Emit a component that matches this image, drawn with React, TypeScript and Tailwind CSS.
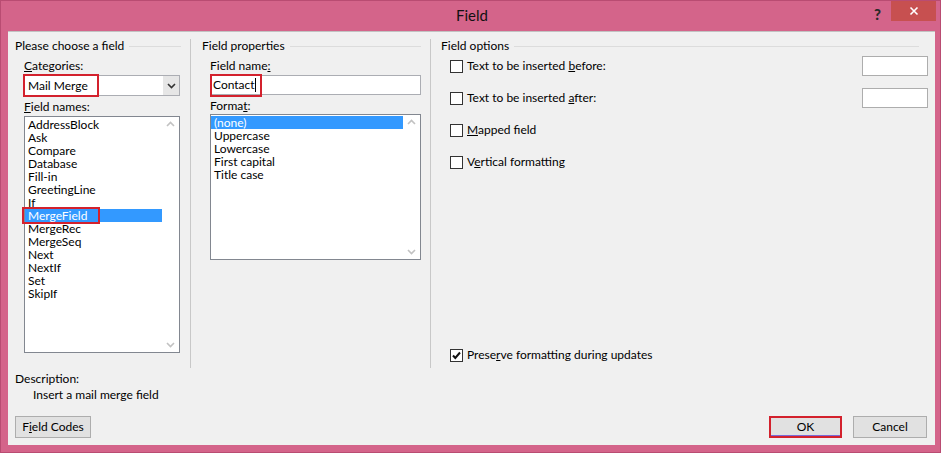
import React from "react";

const font = { fontFamily: 'Lato, "Noto Sans", sans-serif' };

function GroupHeader({ title }: { title: string }) {
  return (
    <div className="flex items-center h-[14px] pr-[9px]">
      <span className="whitespace-nowrap leading-[14px]">{title}</span>
      <div className="flex-1 h-px bg-[#dcdcdc] ml-[5px] mt-px" />
    </div>
  );
}

function ScrollArrows() {
  return (
    <div className="w-[17px] flex flex-col justify-between items-center py-[4px]">
      <svg width="9" height="6" viewBox="0 0 9 6">
        <path d="M1 5 L4.5 1.5 L8 5" fill="none" stroke="#c2c2c2" strokeWidth="1.6" />
      </svg>
      <svg width="9" height="6" viewBox="0 0 9 6">
        <path d="M1 1 L4.5 4.5 L8 1" fill="none" stroke="#c2c2c2" strokeWidth="1.6" />
      </svg>
    </div>
  );
}

function ListBox({
  items,
  selected,
  height,
  width,
  markSelected,
}: {
  items: string[];
  selected: number;
  height: string;
  width: string;
  markSelected?: boolean;
}) {
  return (
    <div className={`flex bg-white border border-[#828790] ${height} ${width}`}>
      <div className="flex-1 pt-px">
        {items.map((it, i) => (
          <div
            key={it}
            className={`relative h-[13px] leading-[13px] pl-[3px] ${
              i === selected ? "bg-[#3399ff] text-white" : "text-black"
            }`}
          >
            {it}
            {markSelected && i === selected && (
              <div className="absolute left-[-3px] top-[-2px] w-[78px] h-[17px] border-2 border-[#d3212d]" />
            )}
          </div>
        ))}
      </div>
      <ScrollArrows />
    </div>
  );
}

function Check({ checked }: { checked?: boolean }) {
  return (
    <div className="w-[13px] h-[13px] border border-[#333] bg-white flex items-center justify-center shrink-0">
      {checked && (
        <svg width="11" height="11" viewBox="0 0 11 11">
          <path d="M2 5.5 L4.3 8 L9 2.5" fill="none" stroke="#111" strokeWidth="2" />
        </svg>
      )}
    </div>
  );
}

function Option({ children, box }: { children: React.ReactNode; box?: boolean }) {
  return (
    <div className="flex items-center h-[20px] pl-[9px]">
      <Check />
      <span className="ml-[4px] whitespace-nowrap">{children}</span>
      {box && <div className="ml-auto w-[66px] h-[20px] bg-white border border-[#adadad]" />}
    </div>
  );
}

export default function App() {
  return (
    <div
      className="w-[941px] h-[453px] bg-[#d4648a] border border-[#b94c72] flex flex-col text-[12px] text-black overflow-hidden"
      style={font}
    >
      {/* Title bar */}
      <div className="relative h-[30px] shrink-0 flex items-center justify-center">
        <span className="text-[15px] text-[#111] -mt-[1px] ml-[3px]">Field</span>
        <div className="absolute right-[59px] top-[2px] text-[15px] font-black text-[#2a2a2a]">?</div>
        <div className="absolute right-[4px] top-0 w-[45px] h-[20px] bg-[#c75050] flex items-center justify-center">
          <svg width="10" height="10" viewBox="0 0 10 10">
            <path d="M1.5 1.5 L8.5 8.5 M8.5 1.5 L1.5 8.5" stroke="#fff" strokeWidth="1.6" />
          </svg>
        </div>
      </div>

      {/* Body */}
      <div className="ml-[7px] mr-[5px] h-[414px] bg-[#f0f0f0] border-t border-[#c2c2c2] px-[7px] pt-[7px] flex flex-col">
        <div className="flex h-[329px]">
          {/* Column 1 */}
          <div className="w-[176px] border-r border-[#c8c8c8] flex flex-col">
            <GroupHeader title="Please choose a field" />
            <div className="pl-[9px] flex flex-col">
              <div className="h-[14px] leading-[14px] mt-[6px]">
                <span className="underline">C</span>ategories:
              </div>
              <div className="relative mt-[2px] w-[156px] h-[21px] bg-white border border-[#abadb3] flex">
                <div className="flex-1 leading-[19px] pl-[3px]">Mail Merge</div>
                <div className="w-[16px] bg-[#e6e6e6] flex items-center justify-center">
                  <svg width="9" height="6" viewBox="0 0 9 6">
                    <path d="M1 1 L4.5 4.5 L8 1" fill="none" stroke="#333" strokeWidth="1.6" />
                  </svg>
                </div>
                <div className="absolute left-[-2px] top-[-2px] w-[76px] h-[23px] border-2 border-[#d3212d]" />
              </div>
              <div className="h-[14px] leading-[14px] mt-[4px]">
                <span className="underline">F</span>ield names:
              </div>
              <div className="mt-[2px]">
                <ListBox
                  items={[
                    "AddressBlock",
                    "Ask",
                    "Compare",
                    "Database",
                    "Fill-in",
                    "GreetingLine",
                    "If",
                    "MergeField",
                    "MergeRec",
                    "MergeSeq",
                    "Next",
                    "NextIf",
                    "Set",
                    "SkipIf",
                  ]}
                  selected={7}
                  height="h-[237px]"
                  width="w-[156px]"
                  markSelected
                />
              </div>
            </div>
          </div>

          {/* Column 2 */}
          <div className="w-[240px] border-r border-[#c8c8c8] pl-[11px] flex flex-col">
            <GroupHeader title="Field properties" />
            <div className="pl-[8px] flex flex-col">
              <div className="h-[14px] leading-[14px] mt-[6px]">
                Field name<span className="underline">:</span>
              </div>
              <div className="relative mt-[2px] w-[211px] h-[20px] bg-white border border-[#abadb3] pl-[2px] leading-[18px]">
                Contact
                <span className="inline-block w-px h-[14px] bg-black align-middle -mt-[2px]" />
                <div className="absolute left-[-1px] top-[-2px] w-[52px] h-[23px] border-2 border-[#d3212d]" />
              </div>
              <div className="h-[14px] leading-[14px] mt-[4px]">
                Forma<span className="underline">t</span>:
              </div>
              <div className="mt-[1px]">
                <ListBox
                  items={["(none)", "Uppercase", "Lowercase", "First capital", "Title case"]}
                  selected={0}
                  height="h-[146px]"
                  width="w-[211px]"
                />
              </div>
            </div>
          </div>

          {/* Column 3 */}
          <div className="flex-1 pl-[10px] flex flex-col">
            <GroupHeader title="Field options" />
            <div className="flex flex-col gap-[12px] mt-[3px]">
              <Option box>
                Text to be inserted <span className="underline">b</span>efore:
              </Option>
              <Option box>
                Text to be inserted <span className="underline">a</span>fter:
              </Option>
              <Option>
                <span className="underline">M</span>apped field
              </Option>
              <Option>
                V<span className="underline">e</span>rtical formatting
              </Option>
            </div>
            <div className="mt-auto flex items-center h-[20px] pl-[9px] mb-[3px]">
              <Check checked />
              <span className="ml-[4px]">
                Prese<span className="underline">r</span>ve formatting during updates
              </span>
            </div>
          </div>
        </div>

        {/* Description */}
        <div className="mt-[4px] h-[14px] leading-[14px]">Description:</div>
        <div className="mt-[2px] h-[14px] leading-[14px] pl-[18px]">Insert a mail merge field</div>

        {/* Buttons */}
        <div className="mt-[14px] flex items-center">
          <button className="w-[76px] h-[22px] bg-[#e1e1e1] border border-[#adadad] leading-[20px]">
            F<span className="underline">i</span>eld Codes
          </button>
          <div className="ml-auto w-[73px] h-[22px] border-2 border-[#d3212d]">
            <button className="w-full h-full bg-[#e1e1e1] border-b border-[#7a6ad8] leading-[17px]">OK</button>
          </div>
          <button className="ml-[11px] mr-[1px] w-[74px] h-[22px] bg-[#e1e1e1] border border-[#adadad] leading-[20px]">
            Cancel
          </button>
        </div>
      </div>
    </div>
  );
}
